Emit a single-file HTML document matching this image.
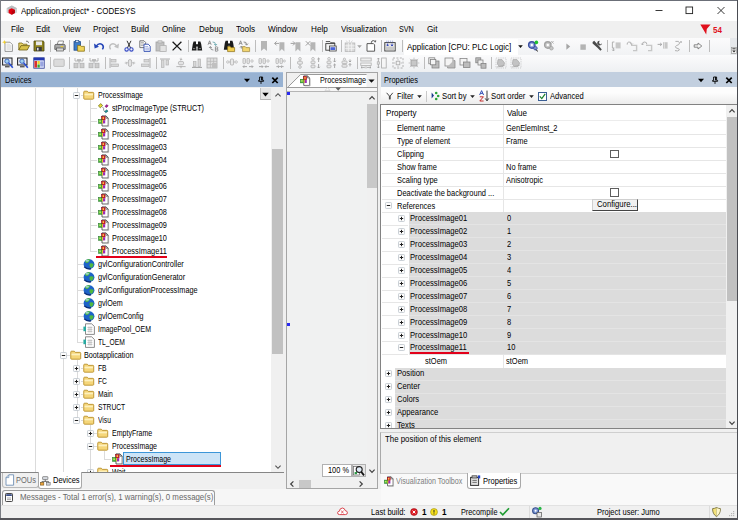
<!DOCTYPE html><html><head><meta charset="utf-8"><title>Application.project* - CODESYS</title><style>
*{box-sizing:border-box;margin:0;padding:0}
html,body{width:738px;height:520px;overflow:hidden;background:#f0f0f0}
body{position:relative;font-family:"Liberation Sans",sans-serif;font-size:8.6px;color:#000}
.a{position:absolute}
.t{position:absolute;white-space:nowrap;transform-origin:0 50%;transform:scaleX(.87);line-height:13px;height:13px}
.m{position:absolute;white-space:nowrap;transform-origin:0 50%;transform:scaleX(.94);font-size:8.7px;line-height:16px;height:16px;top:21.4px}
.sep{position:absolute;width:1px;height:12px;background:#b9b9b9}
.ln{position:absolute;background:#d9d9d9}
svg{position:absolute;overflow:visible}
</style></head><body>
<div class="a" style="left:0px;top:0px;width:738px;height:1px;background:#6b6f78;"></div>
<div class="a" style="left:0px;top:0px;width:1px;height:520px;background:#7a7d84;"></div>
<div class="a" style="left:737px;top:0px;width:1px;height:520px;background:#4a4c52;"></div>
<div class="a" style="left:1px;top:1px;width:736px;height:20px;background:#ffffff;"></div>
<svg style="left:6px;top:5px" width="12" height="10" viewBox="0 0 12 10"><path d="M0.6 3.2 L5.8 0.5 L11 3.2 V7.4 L5.8 9.8 L0.6 7.4Z" fill="#cfd2d4"/><path d="M0.6 3.2 L5.8 0.5 L11 3.2 L5.8 5.4Z" fill="#b9bcbf"/><path d="M2.6 4.7 L5.7 3.2 L8.8 4.7 V8.1 L5.7 9.8 L2.6 8.1Z" fill="#e2000f"/><path d="M5.7 6.2 L8.8 4.7 V8.1 L5.7 9.8Z" fill="#b8000c"/></svg>
<span class="t" style="left:20.6px;top:4.6px;font-size:8.9px;transform:scaleX(.9)">Application.project* - CODESYS</span>
<svg style="left:650px;top:2px" width="84" height="18" viewBox="0 0 84 18"><g stroke="#222" stroke-width="0.9" fill="none"><path d="M5.5 8.5h7"/><rect x="36" y="5" width="6.6" height="6.6"/><path d="M67.5 5l7 7M74.5 5l-7 7"/></g></svg>
<div class="a" style="left:1px;top:21px;width:736px;height:17px;background:#f0f0f0;"></div>
<span class="m" style="left:11px;top:21.4px;">File</span>
<span class="m" style="left:36px;top:21.4px;">Edit</span>
<span class="m" style="left:63px;top:21.4px;">View</span>
<span class="m" style="left:93px;top:21.4px;">Project</span>
<span class="m" style="left:131px;top:21.4px;">Build</span>
<span class="m" style="left:162px;top:21.4px;">Online</span>
<span class="m" style="left:199px;top:21.4px;">Debug</span>
<span class="m" style="left:236px;top:21.4px;">Tools</span>
<span class="m" style="left:268px;top:21.4px;">Window</span>
<span class="m" style="left:311px;top:21.4px;">Help</span>
<span class="m" style="left:341px;top:21.4px;">Visualization</span>
<span class="m" style="left:399px;top:21.4px;transform:scaleX(.83)">SVN</span>
<span class="m" style="left:427px;top:21.4px;">Git</span>
<svg style="left:700px;top:24px" width="12" height="11" viewBox="0 0 12 11"><path d="M0.3 0.5 H10.6 L6.8 5 L6.2 10.4 L3.6 6Z" fill="#e0101c"/></svg>
<span class="t" style="left:713px;top:23px;color:#e0101c;font-weight:bold;font-size:8.4px;transform:scaleX(.95);line-height:14px;height:14px">54</span>
<div class="a" style="left:1px;top:38px;width:736px;height:17px;background:linear-gradient(#fbfbfc,#f1f2f4);"></div>
<div class="a" style="left:1px;top:55px;width:736px;height:17px;background:linear-gradient(#fbfbfc,#eef0f2);"></div>
<div class="a" style="left:729.5px;top:38px;width:7.5px;height:17px;background:#e6e8eb;"></div>
<svg style="left:2.3px;top:39.8px" width="12" height="12" viewBox="0 0 12 12"><path d="M3 2.2 H8 L10.4 4.6 V11.4 H3Z" fill="#fff" stroke="#7d7d7d" stroke-width=".8"/><path d="M4.4 3.4 H7.4 L9.2 5.4 V10.2 H4.4Z" fill="#e4e4e4"/><path d="M2.4 0 L3 1.6 L4.8 2.2 L3 2.8 L2.4 4.6 L1.8 2.8 L0 2.2 L1.8 1.6Z" fill="#f2cf2a"/></svg>
<svg style="left:17.6px;top:39.8px" width="12" height="12" viewBox="0 0 12 12"><path d="M0.8 10 V3 H4 L5 4.2 H9 V5.4" fill="#e8d26a" stroke="#7a6a18" stroke-width=".8"/><path d="M0.8 10 L3 5.6 H11.6 L9.2 10Z" fill="#d8c24a" stroke="#6d5e14" stroke-width=".8"/><path d="M8 1.2 q2.2 -.6 2.6 1.6" fill="none" stroke="#555" stroke-width=".8"/></svg>
<svg style="left:33.4px;top:39.8px" width="12" height="12" viewBox="0 0 12 12"><path d="M1 1 H10.2 L11 1.8 V11 H1Z" fill="#8f8420" stroke="#4d470e" stroke-width=".8"/><rect x="3" y="1.4" width="6" height="3.8" fill="#e9e9e9"/><rect x="3.2" y="7" width="5.6" height="4" fill="#3b3b3b"/><rect x="4" y="7.8" width="1.6" height="2.6" fill="#ddd"/></svg>
<div class="a" style="left:50.0px;top:40.3px;width:1px;height:11.5px;background:#bdbdbd;"></div>
<svg style="left:53.6px;top:39.8px" width="12" height="12" viewBox="0 0 12 12"><path d="M3.2 4.4 L4.4 1 H9.6 L8.8 4.4Z" fill="#fff" stroke="#666" stroke-width=".7"/><path d="M0.8 5.6 Q0.8 4.4 2 4.4 H10 Q11.2 4.4 11.2 5.6 V9.4 H0.8Z" fill="#a9a9a9" stroke="#555" stroke-width=".8"/><rect x="2.4" y="8" width="7.2" height="3" fill="#d9d9d9" stroke="#555" stroke-width=".7"/><rect x="6.6" y="6" width="2.6" height="1.2" fill="#e5c93a"/></svg>
<div class="a" style="left:69.3px;top:40.3px;width:1px;height:11.5px;background:#bdbdbd;"></div>
<svg style="left:73.0px;top:39.8px" width="12" height="12" viewBox="0 0 12 12"><rect x="1" y="1.6" width="6.4" height="8.6" fill="#3d7cc9" stroke="#1f4b8a" stroke-width=".8"/><rect x="2.6" y="0.6" width="3.2" height="2" fill="#cfe0f5" stroke="#1f4b8a" stroke-width=".6"/><path d="M4.6 5.4 H7.4 L8.2 6.4 H11.4 V11.2 H4.6Z" fill="#f0d45a" stroke="#8a7416" stroke-width=".8"/></svg>
<div class="a" style="left:89.1px;top:40.3px;width:1px;height:11.5px;background:#bdbdbd;"></div>
<svg style="left:93.0px;top:39.8px" width="12" height="12" viewBox="0 0 12 12"><path d="M3 6.4 Q6 2.4 9.2 4.6 Q11.4 6.6 9.4 9.4" fill="none" stroke="#2747b8" stroke-width="1.5"/><path d="M1 3.6 L1.6 8.4 L6 6.8Z" fill="#2747b8"/></svg>
<svg style="left:108.2px;top:39.8px;opacity:.82" width="12" height="12" viewBox="0 0 12 12"><path d="M9 6.4 Q6 2.4 2.8 4.6 Q0.6 6.6 2.6 9.4" fill="none" stroke="#b5b5b5" stroke-width="1.4"/><path d="M11 3.6 L10.4 8.4 L6 6.8Z" fill="#b5b5b5"/></svg>
<svg style="left:123.4px;top:39.8px" width="12" height="12" viewBox="0 0 12 12"><path d="M4 0.8 L7.6 8 M8 0.8 L4.4 8" stroke="#333" stroke-width="1"/><circle cx="3.6" cy="9.4" r="1.7" fill="none" stroke="#3347c4" stroke-width="1.1"/><circle cx="8.4" cy="9.4" r="1.7" fill="none" stroke="#3347c4" stroke-width="1.1"/></svg>
<svg style="left:139.0px;top:39.8px" width="12" height="12" viewBox="0 0 12 12"><path d="M0.8 0.8 H5 L6.6 2.4 V7.6 H0.8Z" fill="#fff" stroke="#555" stroke-width=".8"/><path d="M1.8 2.4h3M1.8 4h3.6M1.8 5.6h3.6" stroke="#777" stroke-width=".6"/><path d="M5 4.2 H9.2 L11.2 6.2 V11.4 H5Z" fill="#fff" stroke="#2d49b0" stroke-width=".9"/><path d="M6.2 6.6h3M6.2 8.2h3.8M6.2 9.8h3.8" stroke="#5f78cf" stroke-width=".6"/></svg>
<svg style="left:155.0px;top:39.8px" width="12" height="12" viewBox="0 0 12 12"><rect x="1" y="2" width="8" height="9" fill="#c2c2c2" stroke="#a3a3a3" stroke-width=".8"/><rect x="3" y="0.8" width="4" height="2.2" fill="#d8d8d8" stroke="#a3a3a3" stroke-width=".6"/><rect x="5" y="5.6" width="6.2" height="5.8" fill="#e3e3e3" stroke="#b1b1b1" stroke-width=".8"/></svg>
<svg style="left:170.6px;top:39.8px" width="12" height="12" viewBox="0 0 12 12"><path d="M1.6 1.8 L10.4 10.4 M10.4 1.8 L1.6 10.4" stroke="#1a1a1a" stroke-width="1.3"/></svg>
<div class="a" style="left:187.5px;top:40.3px;width:1px;height:11.5px;background:#bdbdbd;"></div>
<svg style="left:191.0px;top:39.8px" width="12" height="12" viewBox="0 0 12 12"><path d="M2.6 1.6 H5 V4 L5.6 10.6 H0.8 L1.8 4Z M7 1.6 H9.4 L10.2 4 L11.2 10.6 H6.4 L7 4Z" fill="#1b1b1b"/><rect x="5" y="4.2" width="2" height="2.4" fill="#1b1b1b"/><path d="M2 8.6 h2.2 M7.8 8.6 h2.2" stroke="#9a9a9a" stroke-width=".8"/></svg>
<svg style="left:206.8px;top:39.8px;opacity:.82" width="12" height="12" viewBox="0 0 12 12"><path d="M1 4.8 L2.6 0.8 L4.2 4.8 M1.6 3.4 H3.6" fill="none" stroke="#666" stroke-width=".8"/><path d="M5.6 2 Q8.6 1.6 8.6 5 M7.2 4 L8.6 5.6 L10 4" fill="none" stroke="#3d8f98" stroke-width=".8"/><path d="M6.4 10 Q3.4 10.4 3.4 7 M2 8 L3.4 6.4 L4.8 8" fill="none" stroke="#666" stroke-width=".8"/><path d="M8.4 6.8 V11.2 H10 Q11 11.2 11 10 Q11 9 10 9 H8.4 M10 9 Q10.8 9 10.8 7.8 Q10.8 6.8 9.8 6.8 H8.4" fill="none" stroke="#555" stroke-width=".7"/></svg>
<svg style="left:222.8px;top:39.8px" width="12" height="12" viewBox="0 0 12 12"><path d="M2.6 0.8 H5 V3.2 L5.6 9.8 H0.8 L1.8 3.2Z M7 0.8 H9.4 L10.2 3.2 L11.2 9.8 H6.4 L7 3.2Z" fill="#1b1b1b"/><rect x="5" y="3.4" width="2" height="2.4" fill="#1b1b1b"/><path d="M4.6 6.6 H7.2 L8 7.6 H11.6 V11.6 H4.6Z" fill="#f2cf52" stroke="#8a6d12" stroke-width=".7"/></svg>
<svg style="left:238.4px;top:39.8px;opacity:.82" width="12" height="12" viewBox="0 0 12 12"><path d="M1 4.8 L2.6 0.8 L4.2 4.8 M1.6 3.4 H3.6" fill="none" stroke="#666" stroke-width=".8"/><path d="M5.6 2 Q8.6 1.6 8.6 4.6 M7.2 3.6 L8.6 5.2 L10 3.6" fill="none" stroke="#555" stroke-width=".8"/><path d="M3.4 8.6 V6.4 M2 7.6 L3.4 6 L4.8 7.6" fill="none" stroke="#666" stroke-width=".8"/><path d="M4.6 6.6 H7.2 L8 7.6 H11.6 V11.6 H4.6Z" fill="#f2cf52" stroke="#8a6d12" stroke-width=".7"/></svg>
<div class="a" style="left:254.9px;top:40.3px;width:1px;height:11.5px;background:#bdbdbd;"></div>
<svg style="left:258.4px;top:39.8px;opacity:.82" width="12" height="12" viewBox="0 0 12 12"><path d="M3 1 H9 V11 L6 8.4 L3 11Z" fill="#a7a7a7"/></svg>
<svg style="left:274.0px;top:39.8px;opacity:.82" width="12" height="12" viewBox="0 0 12 12"><path d="M5.4 2.2 H10.4 V11.4 L7.9 9 L5.4 11.4Z" fill="#a7a7a7"/><path d="M0.8 3.4 H5 M2.6 1.4 L0.6 3.4 L2.6 5.4" fill="none" stroke="#8d8d8d" stroke-width="1"/></svg>
<svg style="left:289.6px;top:39.8px;opacity:.82" width="12" height="12" viewBox="0 0 12 12"><path d="M5.4 2.2 H10.4 V11.4 L7.9 9 L5.4 11.4Z" fill="#a7a7a7"/><path d="M0.6 3.4 H4.8 M3 1.4 L5 3.4 L3 5.4" fill="none" stroke="#8d8d8d" stroke-width="1"/></svg>
<svg style="left:305.0px;top:39.8px;opacity:.82" width="12" height="12" viewBox="0 0 12 12"><path d="M5.4 2.2 H10.4 V11.4 L7.9 9 L5.4 11.4Z" fill="#a7a7a7"/><path d="M0.8 1.2 L5.2 5.6 M5.2 1.2 L0.8 5.6" stroke="#8d8d8d" stroke-width="1"/></svg>
<div class="a" style="left:321.7px;top:40.3px;width:1px;height:11.5px;background:#bdbdbd;"></div>
<svg style="left:325.0px;top:39.8px" width="12" height="12" viewBox="0 0 12 12"><path d="M0.8 1.6 H5 L6 2.8 H9.6 V4" fill="#fff" stroke="#3c3c3c" stroke-width=".9"/><rect x="0.8" y="3.6" width="9" height="6.6" fill="#f3f3f3" stroke="#3c3c3c" stroke-width=".9"/><rect x="4.4" y="6" width="6.8" height="5" fill="#fff" stroke="#3c3c3c" stroke-width=".8"/><rect x="5.4" y="7.2" width="4.8" height="2.8" fill="#4a63d8"/></svg>
<div class="a" style="left:340.9px;top:40.3px;width:1px;height:11.5px;background:#bdbdbd;"></div>
<svg style="left:344.0px;top:39.8px;opacity:.82" width="12" height="12" viewBox="0 0 12 12"><path d="M2.2 0.6 l1 1.2 M5.4 0.2 v1.6 M8.4 0.6 l-1 1.2" stroke="#b5b5b5" stroke-width=".7"/><rect x="1.2" y="3" width="9.6" height="8.4" fill="#d4d4d4" stroke="#a9a9a9" stroke-width=".8"/><path d="M1.2 5.8h9.6M1.2 8.6h9.6M4.4 3v8.4M7.6 3v8.4" stroke="#f4f4f4" stroke-width=".8"/></svg>
<svg style="left:365.0px;top:39.8px" width="12" height="12" viewBox="0 0 12 12"><path d="M2 3.6 H8.4 L9.6 4.8 V11.2 H2Z" fill="#fff" stroke="#4a4a4a" stroke-width=".9"/><path d="M6.4 3.6 V2.4 Q6.4 0.6 8.4 0.6 Q10.2 0.6 10.2 2.4" fill="none" stroke="#4a4a4a" stroke-width=".9"/><path d="M9.8 0.4 l1.6 .4 -.8 1.2Z" fill="#222"/></svg>
<div class="a" style="left:380.5px;top:40.3px;width:1px;height:11.5px;background:#bdbdbd;"></div>
<svg style="left:383.6px;top:39.8px" width="12" height="12" viewBox="0 0 12 12"><rect x="0.8" y="2.6" width="10.4" height="8.4" fill="#e9e9e9" stroke="#3b3b3b" stroke-width=".9"/><rect x="1.6" y="6.6" width="8.8" height="3.6" fill="#c9c9c9"/><path d="M2.8 0.8 v1.4 M4.6 0.8 v1.4 M6.6 0.8 v1.4 M8.6 0.8 v1.4" stroke="#3550c8" stroke-width=".8" stroke-dasharray=".6 .5"/><path d="M3.6 3.6 V5.6 M2.6 4.8 L3.6 6 L4.6 4.8 M8 3.6 V5.6 M7 4.8 L8 6 L9 4.8" fill="none" stroke="#2338b8" stroke-width=".9"/></svg>
<div class="a" style="left:401.5px;top:40.3px;width:1px;height:11.5px;background:#bdbdbd;"></div>
<svg style="left:527.0px;top:39.8px" width="12" height="12" viewBox="0 0 12 12"><circle cx="4.8" cy="5" r="3.2" fill="#8fa3dc" stroke="#3b4fa0" stroke-width="1.4"/><circle cx="4.8" cy="5" r="1.2" fill="#fff"/><circle cx="9.4" cy="2.4" r="1.8" fill="#1fc22f"/><circle cx="8.4" cy="8.2" r="1.8" fill="#7a8fd0" stroke="#3b4fa0" stroke-width=".8"/><path d="M8.6 9.6 l2.4 1.8" stroke="#222" stroke-width=".9"/></svg>
<svg style="left:542.8px;top:39.8px" width="12" height="12" viewBox="0 0 12 12"><circle cx="4.8" cy="5" r="3.2" fill="#c6c6c6" stroke="#a2a2a2" stroke-width="1.4"/><circle cx="4.8" cy="5" r="1.2" fill="#fff"/><path d="M8.2 1 l2.4 2.6 M10.6 1 l-2.4 2.6" stroke="#a9a9a9" stroke-width=".8"/><circle cx="8.4" cy="8.2" r="1.8" fill="#c6c6c6" stroke="#a2a2a2" stroke-width=".8"/></svg>
<svg style="left:561.6px;top:39.8px" width="12" height="12" viewBox="0 0 12 12"><path d="M4.4 3.4 L8.2 6.6 L4.4 9.8Z" fill="#a5a5a5"/></svg>
<svg style="left:576.6px;top:39.8px;opacity:.82" width="12" height="12" viewBox="0 0 12 12"><rect x="3.4" y="4.4" width="5.4" height="5.4" fill="#a5a5a5"/></svg>
<svg style="left:591.0px;top:39.8px" width="12" height="12" viewBox="0 0 12 12"><path d="M1.6 2 L3.2 0.8 L8 6 L10.8 9.4 L9.4 10.8 L6.2 7.6 L1.6 3.4Z" fill="#4b4b4b"/><path d="M8.6 0.8 Q6 1 6.2 3.8 L8 5.6 Q10.8 5.8 11 3.2 L9.4 4.4 L8 3 Z" fill="#4b4b4b"/></svg>
<div class="a" style="left:606.5px;top:40.3px;width:1px;height:11.5px;background:#bdbdbd;"></div>
<svg style="left:610.0px;top:39.8px;opacity:.82" width="12" height="12" viewBox="0 0 12 12"><path d="M4.4 2 H2.4 V8 H4.4 M3.4 8 V10.8 M2.2 9.6 L3.4 11 L4.6 9.6" fill="none" stroke="#9a9a9a" stroke-width=".9"/><rect x="5.6" y="2.4" width="5" height="6" fill="#bdbdbd"/></svg>
<svg style="left:625.6px;top:39.8px;opacity:.82" width="12" height="12" viewBox="0 0 12 12"><path d="M5.6 4.4 Q5.4 1.6 2.8 2 Q0.8 2.4 1.2 4.6 M4.4 3.4 L5.6 4.8 L6.8 3.6" fill="none" stroke="#9a9a9a" stroke-width=".9"/><path d="M5 5.4 H10.6 V10.6 H7" fill="none" stroke="#bdbdbd" stroke-width="1.4"/></svg>
<svg style="left:641.0px;top:39.8px;opacity:.82" width="12" height="12" viewBox="0 0 12 12"><path d="M1.4 4.6 Q1.2 1.8 3.8 2 Q6 2.2 5.8 4.4 M0.4 3.6 L1.4 5 L2.6 3.8" fill="none" stroke="#9a9a9a" stroke-width=".9"/><path d="M5 5.4 H10.6 V10.6 H7" fill="none" stroke="#bdbdbd" stroke-width="1.4"/></svg>
<svg style="left:656.8px;top:39.8px;opacity:.82" width="12" height="12" viewBox="0 0 12 12"><path d="M0.6 4.4 H4.6 M3.2 3 L4.8 4.4 L3.2 5.8" fill="none" stroke="#8f8f8f" stroke-width=".9"/><rect x="6" y="2.2" width="4.6" height="6.4" fill="#bdbdbd"/><path d="M7.4 2.2v6.4" stroke="#f2f2f2" stroke-width=".6"/></svg>
<svg style="left:672.4px;top:39.8px;opacity:.82" width="12" height="12" viewBox="0 0 12 12"><path d="M3.4 1.4 Q7.4 0.6 7.6 3 Q7.4 5 4.4 5.6 Q2.6 6.6 4.2 8 Q7.8 8.6 7.4 10 Q6 11.6 3 10.6" fill="none" stroke="#a3a3a3" stroke-width="1"/><path d="M8 1 l2 2 m0 -2 l-2 2" stroke="#a3a3a3" stroke-width=".7"/></svg>
<div class="a" style="left:689.1px;top:40.3px;width:1px;height:11.5px;background:#bdbdbd;"></div>
<svg style="left:692.4px;top:39.8px" width="12" height="12" viewBox="0 0 12 12"><path d="M2.2 4.8 H6 V3 L9.8 6 L6 9 V7.2 H2.2Z" fill="#f6f6f6" stroke="#7c7c7c" stroke-width=".9"/></svg>
<div class="a" style="left:708.9px;top:40.3px;width:1px;height:11.5px;background:#bdbdbd;"></div>
<svg style="left:2.2px;top:56.8px" width="12" height="12" viewBox="0 0 12 12"><rect x="0.6" y="1" width="9.4" height="7" fill="#e9eef7" stroke="#1f1f1f" stroke-width="1"/><path d="M3 9.8 H7.6" stroke="#1f1f1f" stroke-width="1"/><circle cx="5" cy="4.2" r="2.2" fill="#9fd0f0" stroke="#2a4fb0" stroke-width=".8"/><path d="M6.6 5.8 L10.8 10.8" stroke="#2a4fd0" stroke-width="1.6"/></svg>
<svg style="left:17.4px;top:56.8px" width="12" height="12" viewBox="0 0 12 12"><rect x="0.6" y="1" width="9.4" height="7" fill="#e9eef7" stroke="#1f1f1f" stroke-width="1"/><path d="M3 9.8 H7.6" stroke="#1f1f1f" stroke-width="1"/><circle cx="5" cy="4.2" r="2.2" fill="#9fd0f0" stroke="#2a4fb0" stroke-width=".8"/><path d="M6.6 5.8 L10.8 10.8" stroke="#2a4fd0" stroke-width="1.6"/></svg>
<svg style="left:33.4px;top:56.8px" width="12" height="12" viewBox="0 0 12 12"><rect x="0.8" y="0.8" width="10.4" height="10.4" fill="#fff" stroke="#1f2f8f" stroke-width=".8"/><rect x="0.8" y="0.8" width="10.4" height="2.6" fill="#2438b0"/><rect x="1.4" y="4" width="2.6" height="6.6" fill="#d93030"/><rect x="4.4" y="4" width="2.4" height="3" fill="#e6d22a"/><rect x="4.4" y="7.4" width="2.4" height="3.2" fill="#37a532"/><rect x="7.2" y="4" width="3.4" height="6.6" fill="#b9c3ee"/><path d="M7.2 6h3.4M7.2 8h3.4" stroke="#4a5ac0" stroke-width=".6"/></svg>
<div class="a" style="left:50.0px;top:57.3px;width:1px;height:11.5px;background:#bdbdbd;"></div>
<svg style="left:53.2px;top:56.8px;opacity:.82" width="12" height="12" viewBox="0 0 12 12"><rect x="0.8" y="2.2" width="10.4" height="7.2" rx="0.8" fill="#d6d6d6" stroke="#aeaeae" stroke-width=".9"/></svg>
<div class="a" style="left:69.3px;top:57.3px;width:1px;height:11.5px;background:#bdbdbd;"></div>
<svg style="left:72.8px;top:56.8px;opacity:.82" width="12" height="12" viewBox="0 0 12 12"><path d="M2 1 V4 H10 V1 M6 4 V6.6" fill="none" stroke="#a0a0a0" stroke-width=".9"/><rect x="1" y="6.2" width="4" height="4.6" fill="#c4c4c4" stroke="#a0a0a0" stroke-width=".7"/><rect x="7" y="6.2" width="4" height="4.6" fill="#c4c4c4" stroke="#a0a0a0" stroke-width=".7"/><path d="M4 3h4" stroke="#a0a0a0" stroke-width="1.6"/></svg>
<svg style="left:88.2px;top:56.8px;opacity:.82" width="12" height="12" viewBox="0 0 12 12"><path d="M2 1 V4 H10 V1 M6 4 V6.6" fill="none" stroke="#a0a0a0" stroke-width=".9"/><rect x="1" y="6.2" width="4" height="4.6" fill="#c4c4c4" stroke="#a0a0a0" stroke-width=".7"/><rect x="7" y="6.2" width="4" height="4.6" fill="#c4c4c4" stroke="#a0a0a0" stroke-width=".7"/><path d="M4 3h4" stroke="#a0a0a0" stroke-width="1.6"/></svg>
<div class="a" style="left:104.7px;top:57.3px;width:1px;height:11.5px;background:#bdbdbd;"></div>
<svg style="left:108.4px;top:56.8px;opacity:.82" width="12" height="12" viewBox="0 0 12 12"><path d="M2 1 V11" stroke="#a0a0a0" stroke-width="1"/><rect x="3" y="2.4" width="5" height="2.6" fill="#d2d2d2" stroke="#a6a6a6" stroke-width=".7"/><rect x="3" y="7" width="7.4" height="2.6" fill="#d2d2d2" stroke="#a6a6a6" stroke-width=".7"/></svg>
<svg style="left:124.0px;top:56.8px;opacity:.82" width="12" height="12" viewBox="0 0 12 12"><path d="M0.8 6 H3.2 M8.8 6 H11.2 M2.2 4.8 L3.4 6 L2.2 7.2 M9.8 4.8 L8.6 6 L9.8 7.2" fill="none" stroke="#a0a0a0" stroke-width=".9"/><rect x="4.4" y="2.6" width="3.2" height="6.8" rx="1.4" fill="#e0e0e0" stroke="#a0a0a0" stroke-width=".8"/></svg>
<svg style="left:139.6px;top:56.8px;opacity:.82" width="12" height="12" viewBox="0 0 12 12"><path d="M10 1 V11" stroke="#a0a0a0" stroke-width="1"/><rect x="4" y="2.4" width="5" height="2.6" fill="#d2d2d2" stroke="#a6a6a6" stroke-width=".7"/><rect x="1.6" y="7" width="7.4" height="2.6" fill="#d2d2d2" stroke="#a6a6a6" stroke-width=".7"/></svg>
<div class="a" style="left:155.9px;top:57.3px;width:1px;height:11.5px;background:#bdbdbd;"></div>
<svg style="left:159.4px;top:56.8px;opacity:.82" width="12" height="12" viewBox="0 0 12 12"><path d="M1 2 H11" stroke="#a0a0a0" stroke-width="1"/><rect x="2.4" y="3" width="2.6" height="7.4" fill="#d2d2d2" stroke="#a6a6a6" stroke-width=".7"/><rect x="7" y="3" width="2.6" height="5" fill="#d2d2d2" stroke="#a6a6a6" stroke-width=".7"/></svg>
<svg style="left:174.8px;top:56.8px;opacity:.82" width="12" height="12" viewBox="0 0 12 12"><path d="M6 0.8 V3 M6 9 V11.2 M4.8 2 L6 3.2 L7.2 2 M1.4 9.6 H10.6" fill="none" stroke="#a0a0a0" stroke-width=".9"/><rect x="3.4" y="4.4" width="5.2" height="3.4" rx="1.4" fill="#e0e0e0" stroke="#a0a0a0" stroke-width=".8"/></svg>
<svg style="left:190.6px;top:56.8px;opacity:.82" width="12" height="12" viewBox="0 0 12 12"><path d="M1 10.4 H11" stroke="#8f8f8f" stroke-width="1"/><rect x="2.4" y="4.6" width="2.6" height="5" fill="#d2d2d2" stroke="#a6a6a6" stroke-width=".7"/><rect x="7" y="2" width="2.6" height="7.6" fill="#d2d2d2" stroke="#a6a6a6" stroke-width=".7"/></svg>
<svg style="left:206.4px;top:56.8px;opacity:.82" width="12" height="12" viewBox="0 0 12 12"><rect x="1" y="1" width="10" height="10" fill="#d9d9d9" stroke="#9e9e9e" stroke-width=".8"/><path d="M1 4.4h10M1 7.6h10M4.4 1v10M7.6 1v10" stroke="#aaa" stroke-width=".7"/><rect x="6" y="6" width="5" height="5" fill="#b5b5b5"/></svg>
<div class="a" style="left:222.5px;top:57.3px;width:1px;height:11.5px;background:#bdbdbd;"></div>
<svg style="left:226.4px;top:56.8px;opacity:.82" width="12" height="12" viewBox="0 0 12 12"><rect x="4.4" y="2" width="3.2" height="6" rx="1" fill="#e6e6e6" stroke="#a0a0a0" stroke-width=".8"/><circle cx="1.8" cy="5" r="1.2" fill="none" stroke="#a0a0a0" stroke-width=".7"/><circle cx="10.2" cy="5" r="1.2" fill="none" stroke="#a0a0a0" stroke-width=".7"/><path d="M3 5h1.4M7.6 5h1.4" stroke="#a0a0a0" stroke-width=".7"/></svg>
<svg style="left:242.2px;top:56.8px;opacity:.82" width="12" height="12" viewBox="0 0 12 12"><rect x="1" y="1.4" width="2.4" height="5.2" rx=".8" fill="#e6e6e6" stroke="#a0a0a0" stroke-width=".8"/><rect x="5" y="1.4" width="2.4" height="5.2" rx=".8" fill="#e6e6e6" stroke="#a0a0a0" stroke-width=".8"/><circle cx="10" cy="4" r="1.2" fill="none" stroke="#a0a0a0" stroke-width=".7"/><path d="M1 9.6 H5 M7 9.6 H11 M2.2 8.4 L1 9.6 L2.2 10.8 M9.8 8.4 L11 9.6 L9.8 10.8" fill="none" stroke="#8d8d8d" stroke-width=".9"/></svg>
<svg style="left:257.8px;top:56.8px;opacity:.82" width="12" height="12" viewBox="0 0 12 12"><rect x="1" y="1.4" width="2.4" height="5.2" rx=".8" fill="#e6e6e6" stroke="#a0a0a0" stroke-width=".8"/><rect x="5" y="1.4" width="2.4" height="5.2" rx=".8" fill="#e6e6e6" stroke="#a0a0a0" stroke-width=".8"/><circle cx="10" cy="4" r="1.2" fill="none" stroke="#a0a0a0" stroke-width=".7"/><path d="M1 9.6 H5 M7 9.6 H11 M3.8 8.4 L5 9.6 L3.8 10.8 M8.2 8.4 L7 9.6 L8.2 10.8" fill="none" stroke="#8d8d8d" stroke-width=".9"/></svg>
<svg style="left:273.6px;top:56.8px;opacity:.82" width="12" height="12" viewBox="0 0 12 12"><rect x="2" y="1.4" width="2.4" height="5.2" rx=".8" fill="#e6e6e6" stroke="#a0a0a0" stroke-width=".8"/><rect x="6" y="1.4" width="2.4" height="5.2" rx=".8" fill="#e6e6e6" stroke="#a0a0a0" stroke-width=".8"/><circle cx="10.4" cy="4" r="1" fill="none" stroke="#a0a0a0" stroke-width=".7"/><path d="M2.4 9.6 H5.4 M6.6 9.6 H9.6 M4.2 8.4 L5.4 9.6 L4.2 10.8 M7.8 8.4 L6.6 9.6 L7.8 10.8" fill="none" stroke="#8d8d8d" stroke-width=".9"/></svg>
<div class="a" style="left:289.9px;top:57.3px;width:1px;height:11.5px;background:#bdbdbd;"></div>
<svg style="left:293.6px;top:56.8px;opacity:.82" width="12" height="12" viewBox="0 0 12 12"><circle cx="6" cy="1.8" r="1.3" fill="none" stroke="#a0a0a0" stroke-width=".8"/><rect x="3.6" y="4.2" width="4.8" height="3" rx="1" fill="#e6e6e6" stroke="#a0a0a0" stroke-width=".8"/><circle cx="6" cy="10" r="1.3" fill="none" stroke="#a0a0a0" stroke-width=".8"/><path d="M6 3.1v1.1M6 7.2v1.5" stroke="#a0a0a0" stroke-width=".7"/></svg>
<svg style="left:309.2px;top:56.8px;opacity:.82" width="12" height="12" viewBox="0 0 12 12"><circle cx="4" cy="1.8" r="1.3" fill="none" stroke="#a0a0a0" stroke-width=".8"/><rect x="2" y="4" width="4" height="2.6" rx=".8" fill="#e6e6e6" stroke="#a0a0a0" stroke-width=".8"/><rect x="2" y="8" width="4" height="2.8" rx=".8" fill="#e6e6e6" stroke="#a0a0a0" stroke-width=".8"/><path d="M9.6 1 V5 M9.6 7 V11 M8.4 2.2 L9.6 1 L10.8 2.2 M8.4 9.8 L9.6 11 L10.8 9.8" fill="none" stroke="#8d8d8d" stroke-width=".9"/></svg>
<svg style="left:325.0px;top:56.8px;opacity:.82" width="12" height="12" viewBox="0 0 12 12"><circle cx="4" cy="1.8" r="1.3" fill="none" stroke="#a0a0a0" stroke-width=".8"/><rect x="2" y="4" width="4" height="2.6" rx=".8" fill="#e6e6e6" stroke="#a0a0a0" stroke-width=".8"/><rect x="2" y="8" width="4" height="2.8" rx=".8" fill="#e6e6e6" stroke="#a0a0a0" stroke-width=".8"/><path d="M9.6 1 V5 M9.6 7 V11 M8.4 3.8 L9.6 5 L10.8 3.8 M8.4 8.2 L9.6 7 L10.8 8.2" fill="none" stroke="#8d8d8d" stroke-width=".9"/></svg>
<svg style="left:340.4px;top:56.8px;opacity:.82" width="12" height="12" viewBox="0 0 12 12"><circle cx="4.4" cy="2.2" r="1.1" fill="none" stroke="#a0a0a0" stroke-width=".8"/><rect x="2" y="4" width="5" height="2.6" rx=".8" fill="#e6e6e6" stroke="#a0a0a0" stroke-width=".8"/><rect x="2" y="7.6" width="5" height="2.6" rx=".8" fill="#e6e6e6" stroke="#a0a0a0" stroke-width=".8"/><path d="M10 2.4 V5 M10 6.6 V9.4 M8.8 3.8 L10 5 L11.2 3.8 M8.8 7.8 L10 6.6 L11.2 7.8" fill="none" stroke="#8d8d8d" stroke-width=".9"/></svg>
<div class="a" style="left:356.7px;top:57.3px;width:1px;height:11.5px;background:#bdbdbd;"></div>
<svg style="left:359.8px;top:56.8px;opacity:.82" width="12" height="12" viewBox="0 0 12 12"><rect x="0.8" y="1" width="10.4" height="3" fill="#ececec" stroke="#a0a0a0" stroke-width=".8"/><rect x="0.8" y="6" width="10.4" height="2.4" fill="#f6f6f6" stroke="#a0a0a0" stroke-width=".8"/><path d="M1 10.4 H11 M2.2 9.4 L1 10.4 L2.2 11.4 M9.8 9.4 L11 10.4 L9.8 11.4" fill="none" stroke="#8d8d8d" stroke-width=".8"/><rect x="4.6" y="9.4" width="2.4" height="2" fill="#c9c9c9"/></svg>
<svg style="left:376.4px;top:56.8px;opacity:.82" width="12" height="12" viewBox="0 0 12 12"><rect x="5.6" y="1" width="4.6" height="10" fill="#f6f6f6" stroke="#9a9a9a" stroke-width=".8"/><path d="M2.4 1 V11 M1.4 2.2 L2.4 1 L3.4 2.2 M1.4 9.8 L2.4 11 L3.4 9.8" fill="none" stroke="#8d8d8d" stroke-width=".8"/><rect x="1.2" y="4.8" width="2.4" height="2.4" fill="#d9d9d9" stroke="#9a9a9a" stroke-width=".6"/></svg>
<svg style="left:392.2px;top:56.8px;opacity:.82" width="12" height="12" viewBox="0 0 12 12"><rect x="1" y="1" width="10" height="10" fill="none" stroke="#9a9a9a" stroke-width=".9" stroke-dasharray="2 1.4"/><rect x="4.2" y="4.2" width="3.6" height="3.6" fill="#f2f2f2" stroke="#9a9a9a" stroke-width=".8"/><path d="M6 2v1.4M6 8.6V10M2 6h1.4M8.6 6H10" stroke="#9a9a9a" stroke-width=".7"/></svg>
<svg style="left:408.0px;top:56.8px;opacity:.82" width="12" height="12" viewBox="0 0 12 12"><rect x="3" y="3" width="6" height="6" fill="#bdbdbd" stroke="#8a8a8a" stroke-width=".8"/><path d="M6 0.6v1.8M6 9.6v1.8M0.6 6h1.8M9.6 6h1.8M1.8 1.8l1 1M10.2 1.8l-1 1M1.8 10.2l1-1M10.2 10.2l-1-1" stroke="#a5a5a5" stroke-width=".7"/></svg>
<div class="a" style="left:423.9px;top:57.3px;width:1px;height:11.5px;background:#bdbdbd;"></div>
<svg style="left:428.0px;top:56.8px" width="12" height="12" viewBox="0 0 12 12"><rect x="0.8" y="0.8" width="6" height="6" fill="#efefef" stroke="#808080" stroke-width=".75"/><rect x="4" y="4" width="7" height="7" fill="#bcbcbc" stroke="#808080" stroke-width=".75"/><rect x="2.4" y="2.4" width="5.4" height="5.4" fill="#f4f4f4" stroke="#808080" stroke-width=".8"/></svg>
<svg style="left:443.6px;top:56.8px" width="12" height="12" viewBox="0 0 12 12"><rect x="1" y="1" width="8" height="8" fill="#f4f4f4" stroke="#808080" stroke-width=".75"/><path d="M9.6 3.6 H11 V11 H3.6 V9.6" fill="#bcbcbc" stroke="#8a8a8a" stroke-width=".75"/></svg>
<svg style="left:459.2px;top:56.8px" width="12" height="12" viewBox="0 0 12 12"><rect x="1" y="1.6" width="7" height="6.4" fill="#f4f4f4" stroke="#808080" stroke-width=".75"/><rect x="4.6" y="5" width="6.4" height="5.6" fill="#bcbcbc" stroke="#808080" stroke-width=".75"/></svg>
<svg style="left:474.8px;top:56.8px" width="12" height="12" viewBox="0 0 12 12"><rect x="0.8" y="0.8" width="5" height="5" fill="#bcbcbc" stroke="#808080" stroke-width=".75"/><rect x="3" y="3" width="5" height="5" fill="#efefef" stroke="#808080" stroke-width=".75"/><rect x="6" y="6.4" width="5" height="4.8" fill="#bcbcbc" stroke="#808080" stroke-width=".75"/></svg>
<div class="a" style="left:490.9px;top:57.3px;width:1px;height:11.5px;background:#bdbdbd;"></div>
<svg style="left:494.6px;top:56.8px;opacity:.82" width="12" height="12" viewBox="0 0 12 12"><rect x="1" y="1" width="10" height="10" fill="none" stroke="#b1b1b1" stroke-width=".7" stroke-dasharray="1.2 1"/><path d="M3 2.6 H7 L9.6 6 L8 9.6 H4.4 L2.4 7Z" fill="#b9b9b9" stroke="#979797" stroke-width=".7"/><path d="M2 10 L10 8" stroke="#979797" stroke-width=".7"/></svg>
<svg style="left:510.4px;top:56.8px;opacity:.82" width="12" height="12" viewBox="0 0 12 12"><rect x="1" y="1" width="10" height="10" fill="none" stroke="#b1b1b1" stroke-width=".7" stroke-dasharray="1.2 1"/><path d="M3 2.6 H7 L9.6 6 L8 9.6 H4.4 L2.4 7Z" fill="#b9b9b9" stroke="#979797" stroke-width=".7"/><path d="M2 10 L10 8" stroke="#979797" stroke-width=".7"/></svg>
<svg style="left:356.5px;top:45px" width="5" height="3" viewBox="0 0 5 3"><path d="M0.2 0.2 H4.8 L2.5 2.9Z" fill="#a5a5a5"/></svg>
<div class="a" style="left:403.5px;top:38.5px;width:114px;height:16px;background:#ffffff;"></div>
<span class="t" style="left:407px;top:39.5px;font-size:9.3px;transform:scaleX(.862);line-height:14px;height:14px">Application [CPU: PLC Logic]</span>
<svg style="left:518px;top:45px" width="5" height="3" viewBox="0 0 5 3"><path d="M0.2 0.2 H4.8 L2.5 2.9Z" fill="#111"/></svg>
<svg style="left:730.5px;top:47px" width="6" height="7" viewBox="0 0 6 7"><rect x="0.4" y="0.4" width="5.2" height="6.2" fill="#f4f4f4" stroke="#8c8c8c" stroke-width=".6"/><path d="M1.4 1.8h3.2" stroke="#222" stroke-width=".9"/><path d="M1.2 3.4 H4.8 L3 5.6Z" fill="#222"/></svg>
<div class="a" style="left:1px;top:72px;width:282px;height:15.3px;background:#98b2d2;border-top:1px solid #a9c0dc"></div>
<span class="t" style="left:5px;top:73.5px;line-height:13px">Devices</span>
<div class="a" style="left:1px;top:87.5px;width:283px;height:385px;background:#ffffff;"></div>
<svg width="0" height="0" style="left:0;top:0"><defs>
<g id="ifold" transform="translate(0.2,0.2) scale(.93,.96)"><path d="M0.6 3 Q0.6 2.1 1.5 2.1 H4.4 L5.5 3.3 H10.4 Q11.3 3.3 11.3 4.2 V9.6 Q11.3 10.4 10.4 10.4 H1.5 Q0.6 10.4 0.6 9.6Z" fill="#f5d67a" stroke="#b98f2a" stroke-width="0.95"/><path d="M1.4 4.6 H10.5 V6.4 H1.4Z" fill="#fdf0bd"/></g>
<g id="ivisu"><path d="M5 0.9 H9 L11.2 3.2 V11 H5Z" fill="#fff" stroke="#505050" stroke-width="0.9"/><path d="M9 0.9 V3.2 H11.2" fill="none" stroke="#505050" stroke-width="0.7"/><path d="M11.7 4 V11.6 H6" fill="none" stroke="#b5b5b5" stroke-width="0.7"/><rect x="4.7" y="1.5" width="3.4" height="3.6" fill="#d6202a" stroke="#8e1018" stroke-width=".5"/><rect x="5.6" y="2.2" width="1.4" height="1.8" fill="#f6d040"/><rect x="1.5" y="4.5" width="3.4" height="3.8" fill="#46b83c" stroke="#1c6b1e" stroke-width=".5"/><rect x="2.4" y="5.4" width="1.4" height="1.6" fill="#d8f06a"/><rect x="4.9" y="5.1" width="1.6" height="3.2" fill="#f2d21f"/><rect x="5.9" y="5.3" width="2.3" height="3.1" fill="#9a2ab8"/></g>
<g id="iglobe"><ellipse cx="6" cy="6.2" rx="5.4" ry="4.9" fill="#1d63c8"/><path d="M2.2 2.6 Q4 0.8 6.5 1 Q7.5 2.5 6 3.8 Q4.5 5.4 3 5 Q1.8 4 2.2 2.6Z M6.8 5.6 Q9 4.6 10.6 6 Q10.6 8.6 8.6 10 Q6.8 9.4 6.4 7.6Z" fill="#4fb83f"/><path d="M1.2 8.8 Q4 11.5 8 10.8" stroke="#0b2f7a" stroke-width="1.4" fill="none"/><ellipse cx="4.2" cy="2.8" rx="1.8" ry="1" fill="#bfe3ff" opacity=".7"/></g>
<g id="ipool"><path d="M2.5 0.8 H8.6 L11.4 3.4 V11.4 H2.5Z" fill="#fff" stroke="#6e6e6e" stroke-width="0.8"/><rect x="0.4" y="3.6" width="2.6" height="4.6" fill="#27a9a0"/><path d="M4.4 4.4h5M4.4 6.4h5M4.4 8.4h5M6 3.6v6M8 3.6v6" stroke="#b5b5b5" stroke-width="0.7"/></g>
<g id="istruct"><path d="M1.4 4 L3.6 1.6 L5.6 3.4 L3.4 5.8Z" fill="#e6d935" stroke="#6f6a10" stroke-width="0.7"/><path d="M5 4.6 L6.6 6.2 V8.4 L8 9.6" fill="none" stroke="#8a8a8a" stroke-width="0.9"/><path d="M8 4.2 L10 2.6 L11.2 4 L9.2 5.6Z" fill="#b0189a" stroke="#5e0c52" stroke-width=".5"/><path d="M7.6 9.4 L9.8 7.8 L11 9.2 L8.8 10.8Z" fill="#1f9aa0" stroke="#0d4b4e" stroke-width=".5"/></g>
<g id="eplus"><rect x="0.5" y="0.5" width="6" height="6" rx="0.8" fill="#fcfcfc" stroke="#bcc4cc" stroke-width="0.8"/><path d="M1.8 3.5h3.4M3.5 1.8v3.4" stroke="#202020" stroke-width="1"/></g>
<g id="eminus"><rect x="0.5" y="0.5" width="6" height="6" rx="0.8" fill="#fcfcfc" stroke="#bcc4cc" stroke-width="0.8"/><path d="M1.8 3.5h3.4" stroke="#202020" stroke-width="1"/></g>
</defs></svg>
<div class="a" style="left:1px;top:88px;width:270px;height:384px;overflow:hidden">
<div class="a" style="left:34px;top:0px;width:1px;height:385px;background:#dbdbdb;"></div>
<div class="a" style="left:62.2px;top:0px;width:1px;height:385px;background:#dbdbdb;"></div>
<div class="a" style="left:75.8px;top:0px;width:1px;height:254px;background:#dbdbdb;"></div>
<div class="a" style="left:75.8px;top:272px;width:1px;height:60px;background:#dbdbdb;"></div>
<div class="a" style="left:89.4px;top:12px;width:1px;height:151px;background:#dbdbdb;"></div>
<div class="a" style="left:89.4px;top:337px;width:1px;height:48px;background:#dbdbdb;"></div>
<div class="a" style="left:103px;top:363px;width:1px;height:8px;background:#dbdbdb;"></div>
<div class="a" style="left:79.8px;top:7px;width:2.5px;height:1px;background:#dbdbdb;"></div>
<svg style="left:72.3px;top:3.5px" width="7" height="7"><use href="#eminus"/></svg>
<svg style="left:82.3px;top:1px" width="12" height="12"><use href="#ifold"/></svg>
<span class="t" style="left:97.05px;top:0.5px;transform:scaleX(0.819)">ProcessImage</span>
<div class="a" style="left:89.4px;top:20px;width:6.599999999999994px;height:1px;background:#dbdbdb;"></div>
<svg style="left:96.0px;top:14px" width="12" height="12"><use href="#istruct"/></svg>
<span class="t" style="left:110.8px;top:13.5px;transform:scaleX(0.837)">stProcImageType (STRUCT)</span>
<div class="a" style="left:89.4px;top:33px;width:6.599999999999994px;height:1px;background:#dbdbdb;"></div>
<svg style="left:96.0px;top:27px" width="12" height="12"><use href="#ivisu"/></svg>
<span class="t" style="left:110.8px;top:26.5px;transform:scaleX(0.852)">ProcessImage01</span>
<div class="a" style="left:89.4px;top:46px;width:6.599999999999994px;height:1px;background:#dbdbdb;"></div>
<svg style="left:96.0px;top:40px" width="12" height="12"><use href="#ivisu"/></svg>
<span class="t" style="left:110.8px;top:39.5px;transform:scaleX(0.852)">ProcessImage02</span>
<div class="a" style="left:89.4px;top:59px;width:6.599999999999994px;height:1px;background:#dbdbdb;"></div>
<svg style="left:96.0px;top:53px" width="12" height="12"><use href="#ivisu"/></svg>
<span class="t" style="left:110.8px;top:52.5px;transform:scaleX(0.852)">ProcessImage03</span>
<div class="a" style="left:89.4px;top:72px;width:6.599999999999994px;height:1px;background:#dbdbdb;"></div>
<svg style="left:96.0px;top:66px" width="12" height="12"><use href="#ivisu"/></svg>
<span class="t" style="left:110.8px;top:65.5px;transform:scaleX(0.852)">ProcessImage04</span>
<div class="a" style="left:89.4px;top:85px;width:6.599999999999994px;height:1px;background:#dbdbdb;"></div>
<svg style="left:96.0px;top:79px" width="12" height="12"><use href="#ivisu"/></svg>
<span class="t" style="left:110.8px;top:78.5px;transform:scaleX(0.852)">ProcessImage05</span>
<div class="a" style="left:89.4px;top:98px;width:6.599999999999994px;height:1px;background:#dbdbdb;"></div>
<svg style="left:96.0px;top:92px" width="12" height="12"><use href="#ivisu"/></svg>
<span class="t" style="left:110.8px;top:91.5px;transform:scaleX(0.852)">ProcessImage06</span>
<div class="a" style="left:89.4px;top:111px;width:6.599999999999994px;height:1px;background:#dbdbdb;"></div>
<svg style="left:96.0px;top:105px" width="12" height="12"><use href="#ivisu"/></svg>
<span class="t" style="left:110.8px;top:104.5px;transform:scaleX(0.852)">ProcessImage07</span>
<div class="a" style="left:89.4px;top:124px;width:6.599999999999994px;height:1px;background:#dbdbdb;"></div>
<svg style="left:96.0px;top:118px" width="12" height="12"><use href="#ivisu"/></svg>
<span class="t" style="left:110.8px;top:117.5px;transform:scaleX(0.852)">ProcessImage08</span>
<div class="a" style="left:89.4px;top:137px;width:6.599999999999994px;height:1px;background:#dbdbdb;"></div>
<svg style="left:96.0px;top:131px" width="12" height="12"><use href="#ivisu"/></svg>
<span class="t" style="left:110.8px;top:130.5px;transform:scaleX(0.852)">ProcessImage09</span>
<div class="a" style="left:89.4px;top:150px;width:6.599999999999994px;height:1px;background:#dbdbdb;"></div>
<svg style="left:96.0px;top:144px" width="12" height="12"><use href="#ivisu"/></svg>
<span class="t" style="left:110.8px;top:143.5px;transform:scaleX(0.852)">ProcessImage10</span>
<div class="a" style="left:89.4px;top:163px;width:6.599999999999994px;height:1px;background:#dbdbdb;"></div>
<svg style="left:96.0px;top:157px" width="12" height="12"><use href="#ivisu"/></svg>
<div class="a" style="left:95.4px;top:167.6px;width:70.4px;height:2.2px;background:#e2001a;"></div>
<span class="t" style="left:110.8px;top:156.5px;transform:scaleX(0.861)">ProcessImage11</span>
<div class="a" style="left:75.8px;top:176px;width:6.5px;height:1px;background:#dbdbdb;"></div>
<svg style="left:82.3px;top:170px" width="12" height="12"><use href="#iglobe"/></svg>
<span class="t" style="left:97.05px;top:169.5px;transform:scaleX(0.864)">gvlConfigurationController</span>
<div class="a" style="left:75.8px;top:189px;width:6.5px;height:1px;background:#dbdbdb;"></div>
<svg style="left:82.3px;top:183px" width="12" height="12"><use href="#iglobe"/></svg>
<span class="t" style="left:97.05px;top:182.5px;transform:scaleX(0.865)">gvlConfigurationGenerator</span>
<div class="a" style="left:75.8px;top:202px;width:6.5px;height:1px;background:#dbdbdb;"></div>
<svg style="left:82.3px;top:196px" width="12" height="12"><use href="#iglobe"/></svg>
<span class="t" style="left:97.05px;top:195.5px;transform:scaleX(0.851)">gvlConfigurationProcessImage</span>
<div class="a" style="left:75.8px;top:215px;width:6.5px;height:1px;background:#dbdbdb;"></div>
<svg style="left:82.3px;top:209px" width="12" height="12"><use href="#iglobe"/></svg>
<span class="t" style="left:97.05px;top:208.5px;transform:scaleX(0.834)">gvlOem</span>
<div class="a" style="left:75.8px;top:228px;width:6.5px;height:1px;background:#dbdbdb;"></div>
<svg style="left:82.3px;top:222px" width="12" height="12"><use href="#iglobe"/></svg>
<span class="t" style="left:97.05px;top:221.5px;transform:scaleX(0.835)">gvlOemConfig</span>
<div class="a" style="left:75.8px;top:241px;width:6.5px;height:1px;background:#dbdbdb;"></div>
<svg style="left:82.3px;top:235px" width="12" height="12"><use href="#ipool"/></svg>
<span class="t" style="left:97.05px;top:234.5px;transform:scaleX(0.809)">ImagePool_OEM</span>
<div class="a" style="left:75.8px;top:254px;width:6.5px;height:1px;background:#dbdbdb;"></div>
<svg style="left:82.3px;top:248px" width="12" height="12"><use href="#ipool"/></svg>
<span class="t" style="left:97.05px;top:247.5px;transform:scaleX(0.780)">TL_OEM</span>
<div class="a" style="left:66.2px;top:267px;width:2.3999999999999915px;height:1px;background:#dbdbdb;"></div>
<svg style="left:58.7px;top:263.5px" width="7" height="7"><use href="#eminus"/></svg>
<svg style="left:68.6px;top:261px" width="12" height="12"><use href="#ifold"/></svg>
<span class="t" style="left:83.3px;top:260.5px;transform:scaleX(0.842)">Bootapplication</span>
<div class="a" style="left:79.8px;top:280px;width:2.5px;height:1px;background:#dbdbdb;"></div>
<svg style="left:72.3px;top:276.5px" width="7" height="7"><use href="#eplus"/></svg>
<svg style="left:82.3px;top:274px" width="12" height="12"><use href="#ifold"/></svg>
<span class="t" style="left:97.05px;top:273.5px;transform:scaleX(0.780)">FB</span>
<div class="a" style="left:79.8px;top:293px;width:2.5px;height:1px;background:#dbdbdb;"></div>
<svg style="left:72.3px;top:289.5px" width="7" height="7"><use href="#eplus"/></svg>
<svg style="left:82.3px;top:287px" width="12" height="12"><use href="#ifold"/></svg>
<span class="t" style="left:97.05px;top:286.5px;transform:scaleX(0.780)">FC</span>
<div class="a" style="left:79.8px;top:306px;width:2.5px;height:1px;background:#dbdbdb;"></div>
<svg style="left:72.3px;top:302.5px" width="7" height="7"><use href="#eplus"/></svg>
<svg style="left:82.3px;top:300px" width="12" height="12"><use href="#ifold"/></svg>
<span class="t" style="left:97.05px;top:299.5px;transform:scaleX(0.791)">Main</span>
<div class="a" style="left:79.8px;top:319px;width:2.5px;height:1px;background:#dbdbdb;"></div>
<svg style="left:72.3px;top:315.5px" width="7" height="7"><use href="#eplus"/></svg>
<svg style="left:82.3px;top:313px" width="12" height="12"><use href="#ifold"/></svg>
<span class="t" style="left:97.05px;top:312.5px;transform:scaleX(0.780)">STRUCT</span>
<div class="a" style="left:79.8px;top:332px;width:2.5px;height:1px;background:#dbdbdb;"></div>
<svg style="left:72.3px;top:328.5px" width="7" height="7"><use href="#eminus"/></svg>
<svg style="left:82.3px;top:326px" width="12" height="12"><use href="#ifold"/></svg>
<span class="t" style="left:97.05px;top:325.5px;transform:scaleX(0.780)">Visu</span>
<div class="a" style="left:93.4px;top:345px;width:2.5999999999999943px;height:1px;background:#dbdbdb;"></div>
<svg style="left:85.9px;top:341.5px" width="7" height="7"><use href="#eplus"/></svg>
<svg style="left:96.0px;top:339px" width="12" height="12"><use href="#ifold"/></svg>
<span class="t" style="left:110.8px;top:338.5px;transform:scaleX(0.818)">EmptyFrame</span>
<div class="a" style="left:93.4px;top:358px;width:2.5999999999999943px;height:1px;background:#dbdbdb;"></div>
<svg style="left:85.9px;top:354.5px" width="7" height="7"><use href="#eminus"/></svg>
<svg style="left:96.0px;top:352px" width="12" height="12"><use href="#ifold"/></svg>
<span class="t" style="left:110.8px;top:351.5px;transform:scaleX(0.819)">ProcessImage</span>
<div class="a" style="left:103.0px;top:371px;width:6.700000000000003px;height:1px;background:#dbdbdb;"></div>
<svg style="left:109.7px;top:365px" width="12" height="12"><use href="#ivisu"/></svg>
<div class="a" style="left:122.4px;top:364px;width:97.2px;height:13px;background:#cce4f7;border:1px solid #3c96d8"></div>
<div class="a" style="left:109.4px;top:376.5px;width:110.2px;height:2px;background:#e2001a;"></div>
<span class="t" style="left:124.55px;top:364.5px;transform:scaleX(0.819)">ProcessImage</span>
<div class="a" style="left:93.4px;top:384px;width:2.5999999999999943px;height:1px;background:#dbdbdb;"></div>
<svg style="left:85.9px;top:380.5px" width="7" height="7"><use href="#eplus"/></svg>
<svg style="left:96.0px;top:378px" width="12" height="12"><use href="#ifold"/></svg>
<span class="t" style="left:110.8px;top:377.5px;transform:scaleX(0.800)">Wait</span>
</div>
<svg style="left:243px;top:76px" width="40" height="9" viewBox="0 0 40 9"><path d="M1 2.8 H7 L4 6.2Z" fill="#000"/><path d="M16.6 1 h3 v3.4 h1 v0.9 h-5 v-0.9 h1Z M18 5.3 v2.6" fill="none" stroke="#000" stroke-width="0.9"/><path d="M18.6 1v3.4" stroke="#000" stroke-width="1"/><path d="M29.3 1.6 L34.7 7 M34.7 1.6 L29.3 7" stroke="#000" stroke-width="1.7"/></svg>
<div class="a" style="left:271px;top:88px;width:13px;height:385px;background:#f0f0f0;"></div>
<div class="a" style="left:259.5px;top:88px;width:11.5px;height:12px;background:#e6e6e6;border-left:1px solid #c2c2c2;border-bottom:1px solid #b4b4b4"></div>
<svg style="left:262px;top:92px" width="7" height="5" viewBox="0 0 7 5"><path d="M0.3 0.8 H6.7 L3.5 4.4Z" fill="#000"/></svg>
<svg style="left:277.5px;top:94.5px" width="1" height="1"><path d="M-2.6 1.4 L0 -1.3 L2.6 1.4" fill="none" stroke="#505050" stroke-width="1.1"/></svg>
<svg style="left:277.5px;top:466.5px" width="1" height="1"><path d="M-2.6 -1.4 L0 1.3 L2.6 -1.4" fill="none" stroke="#505050" stroke-width="1.1"/></svg>
<div class="a" style="left:272px;top:149px;width:11px;height:205px;background:#c1c1c1;"></div>
<div class="a" style="left:1px;top:472px;width:283px;height:1px;background:#868686;"></div>
<div class="a" style="left:1.5px;top:473px;width:37px;height:15px;background:#f0f0f0;border:1px solid #b9b9b9;border-top:none;border-radius:0 0 3px 3px"></div>
<svg style="left:5px;top:474px" width="10" height="12" viewBox="0 0 10 12"><path d="M1 3.6 L3.8 0.8 H8.6 V11.2 H1Z" fill="#fff" stroke="#6f8fb4" stroke-width="0.9"/><path d="M1 3.6 H3.8 V0.8" fill="none" stroke="#6f8fb4" stroke-width="0.8"/></svg>
<span class="t" style="left:16px;top:474.1px;color:#6a6a6a">POUs</span>
<div class="a" style="left:38px;top:472px;width:44px;height:16.5px;background:#ffffff;border:1px solid #a9a9a9;border-top:none;border-radius:0 0 3px 3px"></div>
<svg style="left:40px;top:475.5px" width="10.5" height="10" viewBox="0 0 12 11"><rect x="3" y="0.5" width="6" height="3.4" rx="0.6" fill="#d9dde3" stroke="#555" stroke-width="0.7"/><path d="M6 4v2M2.2 8V6h7.6v2" stroke="#444" stroke-width="0.8" fill="none"/><rect x="0.4" y="7.2" width="4" height="3" fill="#e9a23b" stroke="#6b4a12" stroke-width="0.6"/><rect x="7.6" y="7.2" width="4" height="3" fill="#cfd4da" stroke="#555" stroke-width="0.6"/></svg>
<span class="t" style="left:53px;top:474.1px;">Devices</span>
<div class="a" style="left:1px;top:489px;width:736px;height:16px;background:#f6f6f6;"></div>
<div class="a" style="left:2px;top:490px;width:212.5px;height:15px;background:#f9f9f9;border:1px solid #9c9c9c;border-bottom:none;border-radius:3px 3px 0 0"></div>
<svg style="left:5px;top:493px" width="8" height="9" viewBox="0 0 8 9"><rect x="0.5" y="0.5" width="7" height="8" rx="0.8" fill="#fff" stroke="#333" stroke-width="0.9"/><rect x="1.2" y="1.2" width="5.6" height="1.8" fill="#3b4f87"/><path d="M2 5h4M2 6.6h4" stroke="#777" stroke-width="0.6"/></svg>
<span class="t" style="left:19.5px;top:491px;color:#686868;font-size:8.7px;transform:scaleX(.905)">Messages - Total 1 error(s), 1 warning(s), 0 message(s)</span>
<div class="a" style="left:1px;top:505px;width:736px;height:13.5px;background:#f0f0f0;border-top:1px solid #e2e2e2"></div>
<div class="a" style="left:0px;top:518px;width:738px;height:2px;background:#55555a;"></div>
<svg style="left:337px;top:507px" width="11" height="9" viewBox="0 0 11 9"><path d="M2.6 7.6 Q0.5 7.6 0.6 5.7 Q0.8 4.2 2.4 4.2 Q2.6 1.2 5.4 1 Q7.8 1.2 8.2 3.6 Q10.4 3.8 10.4 5.8 Q10.3 7.6 8.4 7.6Z" fill="#fff" stroke="#d6303a" stroke-width="0.9"/><path d="M4.2 3.8 l2.4 2.4 m0 -2.4 l-2.4 2.4" stroke="#d6303a" stroke-width="0.8"/></svg>
<span class="t" style="left:371px;top:505.5px;transform:scaleX(.88)">Last build:</span>
<svg style="left:409.5px;top:508px" width="8" height="8" viewBox="0 0 9 9"><circle cx="4.5" cy="4.5" r="3.9" fill="#e01b24" stroke="#8f0e14" stroke-width="0.6"/><path d="M3 3l3 3M6 3l-3 3" stroke="#fff" stroke-width="1.1"/></svg>
<span class="t" style="left:421.5px;top:505.5px;font-weight:bold;transform:scaleX(.95)">1</span>
<svg style="left:429.5px;top:508px" width="8" height="8" viewBox="0 0 9 9"><circle cx="4.5" cy="4.5" r="3.9" fill="#f5e01c" stroke="#8b7d00" stroke-width="0.6"/><path d="M4.5 2.2v3" stroke="#222" stroke-width="1.1"/><circle cx="4.5" cy="6.6" r="0.6" fill="#222"/></svg>
<span class="t" style="left:441.5px;top:505.5px;font-weight:bold;transform:scaleX(.95)">1</span>
<span class="t" style="left:461px;top:505.5px;transform:scaleX(.85)">Precompile</span>
<svg style="left:499px;top:507px" width="11" height="9" viewBox="0 0 11 9"><path d="M1 5 L3.8 7.8 L10 1.2" fill="none" stroke="#1e9b32" stroke-width="1.6"/></svg>
<div class="a" style="left:528.5px;top:506px;width:1px;height:12px;background:#dcdcdc;"></div>
<svg style="left:531px;top:506px" width="12" height="12" viewBox="0 0 12 12"><circle cx="4.6" cy="4.8" r="3" fill="#7f9bd6" stroke="#39518f" stroke-width="1.1"/><circle cx="4.6" cy="4.8" r="1" fill="#fff"/><circle cx="9" cy="2.4" r="1.6" fill="#27b545"/><rect x="6" y="6.4" width="4.6" height="4.6" fill="#e8e8e8" stroke="#555" stroke-width="0.7"/></svg>
<span class="t" style="left:596.5px;top:505.5px;transform:scaleX(.875)">Project user: Jumo</span>
<div class="a" style="left:708.5px;top:506px;width:1px;height:12px;background:#dcdcdc;"></div>
<svg style="left:712px;top:506.5px" width="9" height="10" viewBox="0 0 9 10"><path d="M4.5 0.5 Q6.4 1.6 8.4 1.6 Q8.6 7 4.5 9.6 Q0.4 7 0.6 1.6 Q2.6 1.6 4.5 0.5Z" fill="#f4e27a" stroke="#6b6430" stroke-width="0.8"/><path d="M4.5 0.9 V9.2" stroke="#8c8443" stroke-width="0.6"/><path d="M4.5 1 Q6.2 2 8 2 Q8 6.6 4.5 9Z" fill="#fffbe0" opacity=".8"/></svg>
<svg style="left:728px;top:510px" width="7" height="7" viewBox="0 0 7 7"><g fill="#b7b7b7"><rect x="5" y="1" width="1.2" height="1.2"/><rect x="3" y="3" width="1.2" height="1.2"/><rect x="5" y="3" width="1.2" height="1.2"/><rect x="1" y="5" width="1.2" height="1.2"/><rect x="3" y="5" width="1.2" height="1.2"/><rect x="5" y="5" width="1.2" height="1.2"/></g></svg>
<div class="a" style="left:286px;top:72px;width:92px;height:417px;background:#f0f0f0;border:1px solid #a5a5a5"></div>
<svg style="left:287px;top:73px" width="90" height="14" viewBox="0 0 90 14"><path d="M1.5 14 L13.6 1.5 H79.5 V14Z" fill="#ffffff"/><path d="M1.2 13.8 L13.6 1.5 H79.5" fill="none" stroke="#8f8f8f" stroke-width="0.9"/></svg>
<svg style="left:298.6px;top:74.6px" width="12" height="12"><use href="#ivisu" transform="scale(.95)"/></svg>
<span class="t" style="left:320.4px;top:73.9px;transform:scaleX(.84)">ProcessImage</span>
<svg style="left:367.5px;top:79px" width="7" height="4" viewBox="0 0 7 4"><path d="M0.4 0.4 H6.6 L3.5 3.8Z" fill="#111"/></svg>
<div class="a" style="left:287px;top:86.6px;width:90px;height:5.2px;background:#f6f6f6;border-top:1px solid #9d9d9d;border-bottom:1px solid #b5b5b5"></div>
<svg style="left:323px;top:87.4px" width="20" height="4" viewBox="0 0 20 4"><path d="M2 3.6 L4.5 0.6 L7 3.6Z" fill="#fafafa" stroke="#c6c6c6" stroke-width="0.6"/><path d="M12.4 0.5 H18 L15.2 3.7Z" fill="#5e5e5e"/></svg>
<div class="a" style="left:287px;top:92px;width:79.5px;height:387px;background:#f0f1f1;"></div>
<div class="a" style="left:366.5px;top:92px;width:10.5px;height:387px;background:#f0f0f0;"></div>
<div class="a" style="left:367px;top:104px;width:9.5px;height:84px;background:#c8c8c8;"></div>
<svg style="left:371.5px;top:97.5px" width="1" height="1"><path d="M-2.6 1.4 L0 -1.3 L2.6 1.4" fill="none" stroke="#404040" stroke-width="1.2"/></svg>
<svg style="left:371.5px;top:471px" width="1" height="1"><path d="M-2.6 -1.4 L0 1.3 L2.6 -1.4" fill="none" stroke="#404040" stroke-width="1.2"/></svg>
<div class="a" style="left:287px;top:92px;width:2.6px;height:2.8px;background:#2a2af0;"></div>
<div class="a" style="left:287px;top:322.5px;width:2.6px;height:3.6px;background:#2a2af0;"></div>
<div class="a" style="left:321.5px;top:463.5px;width:30.5px;height:13.5px;background:#ffffff;border:1px solid #b1b1b1"></div>
<span class="t" style="left:327.5px;top:463.8px;transform:scaleX(.86)">100 %</span>
<div class="a" style="left:352px;top:463.5px;width:13.5px;height:13.5px;background:#e6e6e6;border:1px solid #b1b1b1"></div>
<svg style="left:353px;top:464.5px" width="12" height="12" viewBox="0 0 12 12"><rect x="0.6" y="1.6" width="6" height="8.4" fill="#fff" stroke="#666" stroke-width="0.7"/><circle cx="6.2" cy="4.6" r="3" fill="#dfeaf5" stroke="#222" stroke-width="1.1"/><path d="M8.2 6.8 L11 10.4" stroke="#111" stroke-width="1.8"/><rect x="1.6" y="7" width="2.4" height="2.2" fill="#2e9a46"/></svg>
<div class="a" style="left:287px;top:479px;width:90px;height:9px;background:#f0f0f0;"></div>
<svg style="left:292px;top:484px" width="1" height="1"><path d="M1.4 -2.6 L-1.3 0 L1.4 2.6" fill="none" stroke="#404040" stroke-width="1.2"/></svg>
<svg style="left:361px;top:484px" width="1" height="1"><path d="M-1.4 -2.6 L1.3 0 L-1.4 2.6" fill="none" stroke="#404040" stroke-width="1.2"/></svg>
<div class="a" style="left:299px;top:480px;width:12px;height:8px;background:#c8c8c8;"></div>
<div class="a" style="left:381px;top:72.3px;width:356px;height:14.9px;background:#c2cfdf;"></div>
<span class="t" style="left:383.5px;top:73.5px;transform:scaleX(.865)">Properties</span>
<svg style="left:696.5px;top:76px" width="40" height="9" viewBox="0 0 40 9"><path d="M1 2.8 H7 L4 6.2Z" fill="#000"/><path d="M16.6 1 h3 v3.4 h1 v0.9 h-5 v-0.9 h1Z M18 5.3 v2.6" fill="none" stroke="#000" stroke-width="0.9"/><path d="M18.6 1v3.4" stroke="#000" stroke-width="1"/><path d="M29.3 1.6 L34.7 7 M34.7 1.6 L29.3 7" stroke="#000" stroke-width="1.7"/></svg>
<div class="a" style="left:381px;top:87.2px;width:356px;height:16.8px;background:linear-gradient(#fdfdfd 35%,#ececec);"></div>
<svg style="left:386px;top:92px" width="8" height="8" viewBox="0 0 8 8"><path d="M0.6 0.8 L3.4 4 V7.4 M6.8 0.8 L4.2 4 V7.4 M0.6 0.8" fill="none" stroke="#333" stroke-width="0.9"/></svg>
<span class="t" style="left:396.5px;top:90px;transform:scaleX(.865)">Filter</span>
<svg style="left:416.5px;top:95px" width="5" height="3" viewBox="0 0 5 3"><path d="M0.2 0.2 H4.8 L2.5 2.9Z" fill="#222"/></svg>
<div class="a" style="left:425.5px;top:90.5px;width:1px;height:11px;background:#c9c9c9;"></div>
<svg style="left:431px;top:91px" width="9" height="10" viewBox="0 0 9 10"><path d="M0.6 1.4 L3 4.4 L0.6 7.4Z" fill="#1b3c8c"/><circle cx="5.2" cy="2" r="1.3" fill="#2aa33a"/><circle cx="7.2" cy="5" r="1.3" fill="#2aa33a"/><circle cx="5.2" cy="8" r="1.3" fill="#2aa33a"/></svg>
<span class="t" style="left:442px;top:90px;transform:scaleX(.9)">Sort by</span>
<svg style="left:470px;top:95px" width="5" height="3" viewBox="0 0 5 3"><path d="M0.2 0.2 H4.8 L2.5 2.9Z" fill="#222"/></svg>
<svg style="left:479px;top:90px" width="11" height="12" viewBox="0 0 11 12"><path d="M0.6 5 L2.6 0.6 L4.6 5 M1.4 3.4 H3.8" fill="none" stroke="#2040b0" stroke-width="0.9"/><path d="M0.8 6.8 H4.4 L0.8 11 H4.6" fill="none" stroke="#c01818" stroke-width="0.9"/><path d="M8 0.6 V10.6 M6.2 8.4 L8 10.8 L9.8 8.4" fill="none" stroke="#222" stroke-width="0.9"/></svg>
<span class="t" style="left:490.5px;top:90px;transform:scaleX(.9)">Sort order</span>
<svg style="left:529px;top:95px" width="5" height="3" viewBox="0 0 5 3"><path d="M0.2 0.2 H4.8 L2.5 2.9Z" fill="#222"/></svg>
<div class="a" style="left:537.5px;top:91.5px;width:9.5px;height:9.5px;background:#ffffff;border:1px solid #3b5f95"></div>
<svg style="left:539px;top:93px" width="7" height="7" viewBox="0 0 7 7"><path d="M0.8 3.4 L2.8 5.6 L6.2 0.8" fill="none" stroke="#1a7f2a" stroke-width="1.2"/></svg>
<span class="t" style="left:549.5px;top:90px;transform:scaleX(.88)">Advanced</span>
<div class="a" style="left:379.9px;top:103.6px;width:357.1px;height:325.2px;background:#ffffff;border:1px solid #828282;border-right:none"></div>
<div class="a" style="left:726px;top:104.6px;width:11px;height:323.4px;background:#f0f0f0;"></div>
<div class="a" style="left:726.5px;top:116.8px;width:10px;height:184.4px;background:#c1c1c1;"></div>
<svg style="left:731.5px;top:111px" width="1" height="1"><path d="M-2.6 1.4 L0 -1.3 L2.6 1.4" fill="none" stroke="#404040" stroke-width="1.2"/></svg>
<svg style="left:731.5px;top:422.5px" width="1" height="1"><path d="M-2.6 -1.4 L0 1.3 L2.6 -1.4" fill="none" stroke="#404040" stroke-width="1.2"/></svg>
<div class="a" style="left:381.5px;top:104.6px;width:344.5px;height:16.4px;background:#ffffff;border-bottom:1px solid #ececec"></div>
<div class="a" style="left:503px;top:105px;width:1px;height:16px;background:#e2e2e2;"></div>
<span class="t" style="left:385.5px;top:106.5px;font-size:9.2px;transform:scaleX(.88)">Property</span>
<span class="t" style="left:507px;top:106.5px;font-size:9.2px;transform:scaleX(.88)">Value</span>
<div class="a" style="left:381.5px;top:121px;width:344.5px;height:307px;overflow:hidden">
<div class="a" style="left:0px;top:12.8px;width:344.5px;height:1px;background:#e6e6e6;"></div>
<div class="a" style="left:121.5px;top:0.3px;width:1px;height:13px;background:#e6e6e6;"></div>
<span class="t" style="left:15.600000000000023px;top:0.8px;">Element name</span>
<span class="t" style="left:124.5px;top:0.8px;">GenElemInst_2</span>
<div class="a" style="left:0px;top:25.78px;width:344.5px;height:1px;background:#e6e6e6;"></div>
<div class="a" style="left:121.5px;top:13.28px;width:1px;height:13px;background:#e6e6e6;"></div>
<span class="t" style="left:15.600000000000023px;top:13.78px;">Type of element</span>
<span class="t" style="left:124.5px;top:13.78px;">Frame</span>
<div class="a" style="left:0px;top:38.75px;width:344.5px;height:1px;background:#e6e6e6;"></div>
<div class="a" style="left:121.5px;top:26.25px;width:1px;height:13px;background:#e6e6e6;"></div>
<span class="t" style="left:15.600000000000023px;top:26.75px;">Clipping</span>
<div class="a" style="left:228.79999999999995px;top:28.55px;width:8.8px;height:8.8px;background:#ffffff;border:1px solid #5e5e5e"></div>
<div class="a" style="left:0px;top:51.72px;width:344.5px;height:1px;background:#e6e6e6;"></div>
<div class="a" style="left:121.5px;top:39.22px;width:1px;height:13px;background:#e6e6e6;"></div>
<span class="t" style="left:15.600000000000023px;top:39.72px;">Show frame</span>
<span class="t" style="left:124.5px;top:39.72px;">No frame</span>
<div class="a" style="left:0px;top:64.7px;width:344.5px;height:1px;background:#e6e6e6;"></div>
<div class="a" style="left:121.5px;top:52.2px;width:1px;height:13px;background:#e6e6e6;"></div>
<span class="t" style="left:15.600000000000023px;top:52.7px;">Scaling type</span>
<span class="t" style="left:124.5px;top:52.7px;">Anisotropic</span>
<div class="a" style="left:0px;top:77.67px;width:344.5px;height:1px;background:#e6e6e6;"></div>
<div class="a" style="left:121.5px;top:65.17px;width:1px;height:13px;background:#e6e6e6;"></div>
<span class="t" style="left:15.600000000000023px;top:65.67px;">Deactivate the background ...</span>
<div class="a" style="left:228.79999999999995px;top:67.47px;width:8.8px;height:8.8px;background:#ffffff;border:1px solid #5e5e5e"></div>
<div class="a" style="left:0px;top:90.65px;width:344.5px;height:1px;background:#e6e6e6;"></div>
<div class="a" style="left:121.5px;top:78.15px;width:1px;height:13px;background:#e6e6e6;"></div>
<span class="t" style="left:15.600000000000023px;top:78.65px;">References</span>
<svg style="left:3.0px;top:81.15px" width="7" height="7"><use href="#eminus"/></svg>
<div class="a" style="left:210.5px;top:77.65px;width:45.5px;height:12px;background:#f1f1f1;border:1px solid #cfcfcf;border-right:1px solid #444;border-bottom:1.5px solid #444"></div>
<span class="t" style="left:215.0px;top:77.15px;transform:scaleX(.9)">Configure...</span>
<div class="a" style="left:27.19999999999999px;top:91.12px;width:320px;height:13px;background:#dcdcdc;border-bottom:1px solid #e4e4e4"></div>
<div class="a" style="left:0px;top:103.62px;width:26.5px;height:1px;background:#e6e6e6;"></div>
<svg style="left:16.399999999999977px;top:93.72px" width="7" height="7"><use href="#eplus"/></svg>
<span class="t" style="left:28.600000000000023px;top:90.72px;transform:scaleX(.888)">ProcessImage01</span>
<span class="t" style="left:125.0px;top:90.72px;">0</span>
<div class="a" style="left:27.19999999999999px;top:104.1px;width:320px;height:13px;background:#dcdcdc;border-bottom:1px solid #e4e4e4"></div>
<div class="a" style="left:0px;top:116.6px;width:26.5px;height:1px;background:#e6e6e6;"></div>
<svg style="left:16.399999999999977px;top:106.69999999999999px" width="7" height="7"><use href="#eplus"/></svg>
<span class="t" style="left:28.600000000000023px;top:103.69999999999999px;transform:scaleX(.888)">ProcessImage02</span>
<span class="t" style="left:125.0px;top:103.69999999999999px;">1</span>
<div class="a" style="left:27.19999999999999px;top:117.07px;width:320px;height:13px;background:#dcdcdc;border-bottom:1px solid #e4e4e4"></div>
<div class="a" style="left:0px;top:129.57px;width:26.5px;height:1px;background:#e6e6e6;"></div>
<svg style="left:16.399999999999977px;top:119.66999999999999px" width="7" height="7"><use href="#eplus"/></svg>
<span class="t" style="left:28.600000000000023px;top:116.66999999999999px;transform:scaleX(.888)">ProcessImage03</span>
<span class="t" style="left:125.0px;top:116.66999999999999px;">2</span>
<div class="a" style="left:27.19999999999999px;top:130.05px;width:320px;height:13px;background:#dcdcdc;border-bottom:1px solid #e4e4e4"></div>
<div class="a" style="left:0px;top:142.55px;width:26.5px;height:1px;background:#e6e6e6;"></div>
<svg style="left:16.399999999999977px;top:132.65px" width="7" height="7"><use href="#eplus"/></svg>
<span class="t" style="left:28.600000000000023px;top:129.65px;transform:scaleX(.888)">ProcessImage04</span>
<span class="t" style="left:125.0px;top:129.65px;">3</span>
<div class="a" style="left:27.19999999999999px;top:143.03px;width:320px;height:13px;background:#dcdcdc;border-bottom:1px solid #e4e4e4"></div>
<div class="a" style="left:0px;top:155.53px;width:26.5px;height:1px;background:#e6e6e6;"></div>
<svg style="left:16.399999999999977px;top:145.63px" width="7" height="7"><use href="#eplus"/></svg>
<span class="t" style="left:28.600000000000023px;top:142.63px;transform:scaleX(.888)">ProcessImage05</span>
<span class="t" style="left:125.0px;top:142.63px;">4</span>
<div class="a" style="left:27.19999999999999px;top:156.0px;width:320px;height:13px;background:#dcdcdc;border-bottom:1px solid #e4e4e4"></div>
<div class="a" style="left:0px;top:168.5px;width:26.5px;height:1px;background:#e6e6e6;"></div>
<svg style="left:16.399999999999977px;top:158.6px" width="7" height="7"><use href="#eplus"/></svg>
<span class="t" style="left:28.600000000000023px;top:155.6px;transform:scaleX(.888)">ProcessImage06</span>
<span class="t" style="left:125.0px;top:155.6px;">5</span>
<div class="a" style="left:27.19999999999999px;top:168.97px;width:320px;height:13px;background:#dcdcdc;border-bottom:1px solid #e4e4e4"></div>
<div class="a" style="left:0px;top:181.47px;width:26.5px;height:1px;background:#e6e6e6;"></div>
<svg style="left:16.399999999999977px;top:171.57px" width="7" height="7"><use href="#eplus"/></svg>
<span class="t" style="left:28.600000000000023px;top:168.57px;transform:scaleX(.888)">ProcessImage07</span>
<span class="t" style="left:125.0px;top:168.57px;">6</span>
<div class="a" style="left:27.19999999999999px;top:181.95px;width:320px;height:13px;background:#dcdcdc;border-bottom:1px solid #e4e4e4"></div>
<div class="a" style="left:0px;top:194.45px;width:26.5px;height:1px;background:#e6e6e6;"></div>
<svg style="left:16.399999999999977px;top:184.54999999999998px" width="7" height="7"><use href="#eplus"/></svg>
<span class="t" style="left:28.600000000000023px;top:181.54999999999998px;transform:scaleX(.888)">ProcessImage08</span>
<span class="t" style="left:125.0px;top:181.54999999999998px;">7</span>
<div class="a" style="left:27.19999999999999px;top:194.93px;width:320px;height:13px;background:#dcdcdc;border-bottom:1px solid #e4e4e4"></div>
<div class="a" style="left:0px;top:207.43px;width:26.5px;height:1px;background:#e6e6e6;"></div>
<svg style="left:16.399999999999977px;top:197.53px" width="7" height="7"><use href="#eplus"/></svg>
<span class="t" style="left:28.600000000000023px;top:194.53px;transform:scaleX(.888)">ProcessImage09</span>
<span class="t" style="left:125.0px;top:194.53px;">8</span>
<div class="a" style="left:27.19999999999999px;top:207.9px;width:320px;height:13px;background:#dcdcdc;border-bottom:1px solid #e4e4e4"></div>
<div class="a" style="left:0px;top:220.4px;width:26.5px;height:1px;background:#e6e6e6;"></div>
<svg style="left:16.399999999999977px;top:210.5px" width="7" height="7"><use href="#eplus"/></svg>
<span class="t" style="left:28.600000000000023px;top:207.5px;transform:scaleX(.888)">ProcessImage10</span>
<span class="t" style="left:125.0px;top:207.5px;">9</span>
<div class="a" style="left:27.19999999999999px;top:220.88px;width:320px;height:13px;background:#dcdcdc;border-bottom:1px solid #e4e4e4"></div>
<div class="a" style="left:0px;top:233.38px;width:26.5px;height:1px;background:#e6e6e6;"></div>
<svg style="left:16.399999999999977px;top:223.48px" width="7" height="7"><use href="#eminus"/></svg>
<span class="t" style="left:28.600000000000023px;top:220.48px;transform:scaleX(.888)">ProcessImage11</span>
<span class="t" style="left:125.0px;top:220.48px;">10</span>
<div class="a" style="left:28.5px;top:231.07999999999998px;width:59px;height:1.8px;background:#e2001a;"></div>
<div class="a" style="left:121.5px;top:233.85px;width:1px;height:13px;background:#e6e6e6;"></div>
<span class="t" style="left:43.5px;top:234.35px;">stOem</span>
<span class="t" style="left:124.5px;top:234.35px;">stOem</span>
<div class="a" style="left:13.5px;top:246.83px;width:340px;height:13px;background:#dcdcdc;border-bottom:1px solid #e4e4e4"></div>
<svg style="left:3.0px;top:249.43px" width="7" height="7"><use href="#eplus"/></svg>
<span class="t" style="left:15.0px;top:246.43px;font-size:8.8px">Position</span>
<div class="a" style="left:13.5px;top:259.8px;width:340px;height:13px;background:#dcdcdc;border-bottom:1px solid #e4e4e4"></div>
<svg style="left:3.0px;top:262.40000000000003px" width="7" height="7"><use href="#eplus"/></svg>
<span class="t" style="left:15.0px;top:259.40000000000003px;font-size:8.8px">Center</span>
<div class="a" style="left:13.5px;top:272.77px;width:340px;height:13px;background:#dcdcdc;border-bottom:1px solid #e4e4e4"></div>
<svg style="left:3.0px;top:275.37px" width="7" height="7"><use href="#eplus"/></svg>
<span class="t" style="left:15.0px;top:272.37px;font-size:8.8px">Colors</span>
<div class="a" style="left:13.5px;top:285.75px;width:340px;height:13px;background:#dcdcdc;border-bottom:1px solid #e4e4e4"></div>
<svg style="left:3.0px;top:288.35px" width="7" height="7"><use href="#eplus"/></svg>
<span class="t" style="left:15.0px;top:285.35px;font-size:8.8px">Appearance</span>
<div class="a" style="left:13.5px;top:298.73px;width:340px;height:13px;background:#dcdcdc;border-bottom:1px solid #e4e4e4"></div>
<svg style="left:3.0px;top:301.33000000000004px" width="7" height="7"><use href="#eplus"/></svg>
<span class="t" style="left:15.0px;top:298.33000000000004px;font-size:8.8px">Texts</span>
</div>
<div class="a" style="left:379.9px;top:432px;width:357.1px;height:41.5px;background:#f0f0f0;border:1px solid #cfcfcf;border-right:none;border-left-color:#a9a9a9"></div>
<span class="t" style="left:384.5px;top:433px;transform:scaleX(.915)">The position of this element</span>
<div class="a" style="left:381px;top:474px;width:356px;height:31px;background:#f9f9f9;"></div>
<svg style="left:383px;top:475.5px" width="11" height="11"><use href="#ivisu" transform="scale(.9)"/></svg>
<span class="t" style="left:396px;top:474.5px;color:#7d7d7d;transform:scaleX(.83)">Visualization Toolbox</span>
<div class="a" style="left:467px;top:472.5px;width:53.5px;height:16px;background:#ffffff;border:1px solid #a9a9a9;border-top:none;border-radius:0 0 3px 3px"></div>
<svg style="left:469.5px;top:475px" width="11" height="11" viewBox="0 0 11 11"><rect x="0.6" y="2.4" width="8" height="8" fill="#e3e3e3" stroke="#333" stroke-width="1"/><rect x="2" y="0.8" width="5" height="2.2" fill="#bbb" stroke="#333" stroke-width="0.7"/><path d="M2.4 5.4h4.4M2.4 7.4h4.4" stroke="#555" stroke-width="0.8"/><rect x="8" y="0.4" width="2.2" height="3" fill="#2344c8"/></svg>
<span class="t" style="left:482.5px;top:474.5px;transform:scaleX(.875)">Properties</span>
</body></html>
